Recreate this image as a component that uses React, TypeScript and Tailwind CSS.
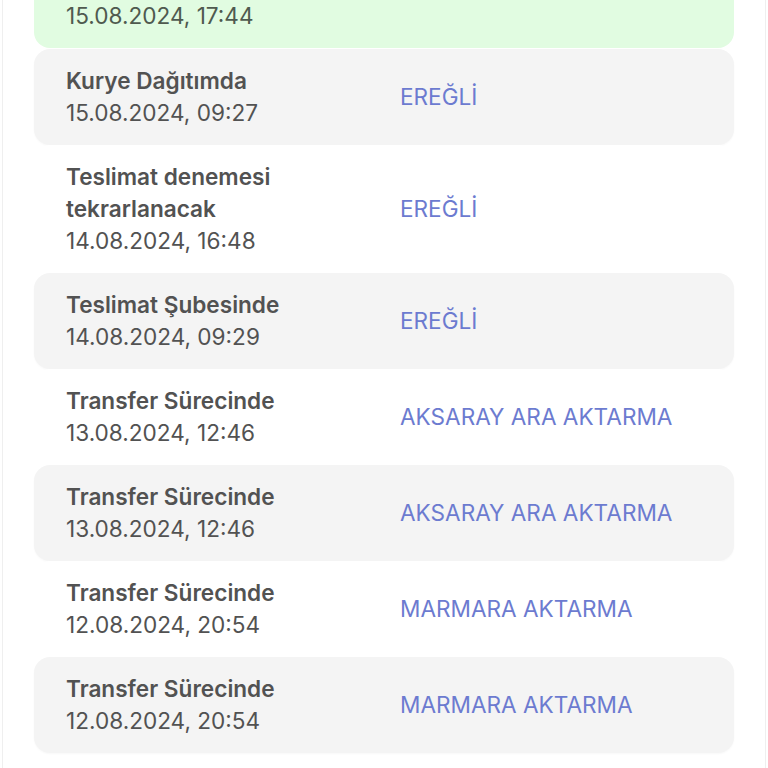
import React from 'react';

type Step = {
  title: string[];
  date: string;
  place: string;
};

const steps: Step[] = [
  { title: ['Kurye Dağıtımda'], date: '15.08.2024, 09:27', place: 'EREĞLİ' },
  { title: ['Teslimat denemesi', 'tekrarlanacak'], date: '14.08.2024, 16:48', place: 'EREĞLİ' },
  { title: ['Teslimat Şubesinde'], date: '14.08.2024, 09:29', place: 'EREĞLİ' },
  { title: ['Transfer Sürecinde'], date: '13.08.2024, 12:46', place: 'AKSARAY ARA AKTARMA' },
  { title: ['Transfer Sürecinde'], date: '13.08.2024, 12:46', place: 'AKSARAY ARA AKTARMA' },
  { title: ['Transfer Sürecinde'], date: '12.08.2024, 20:54', place: 'MARMARA AKTARMA' },
  { title: ['Transfer Sürecinde'], date: '12.08.2024, 20:54', place: 'MARMARA AKTARMA' },
];

const App = () => {
  return (
    <div
      className="h-[768px] overflow-hidden bg-white"
      style={{ fontFamily: 'Inter, "Noto Sans", sans-serif' }}
    >
      <div className="mx-[2px] h-full border-x border-[#efefef] bg-white overflow-hidden">
        <div className="-mt-12 px-[31px] flex flex-col">
          {/* delivered card, scrolled mostly out of view */}
          <div className="rounded-2xl bg-[#e1fce1] pl-8 pt-12 pb-4 text-[22.6px] leading-8 text-[#4f5a4f]">
            <div>15.08.2024, 17:44</div>
          </div>
          {steps.map((s, i) => (
            <div
              key={i}
              className={`grid grid-cols-[334px_1fr] items-center rounded-2xl pl-8 py-4 text-[22.6px] leading-8 text-[#525252] ${
                i % 2 === 0 ? 'bg-[#f4f4f4] shadow-[0_1px_2px_rgba(0,0,0,0.03)]' : 'bg-white'
              } ${i === 0 ? 'mt-px' : ''}`}
            >
              <div>
                {s.title.map((t) => (
                  <div key={t} className="font-semibold">{t}</div>
                ))}
                <div>{s.date}</div>
              </div>
              <div className="text-[#6c7bd0]">{s.place}</div>
            </div>
          ))}
        </div>
      </div>
    </div>
  );
};

export default App;
